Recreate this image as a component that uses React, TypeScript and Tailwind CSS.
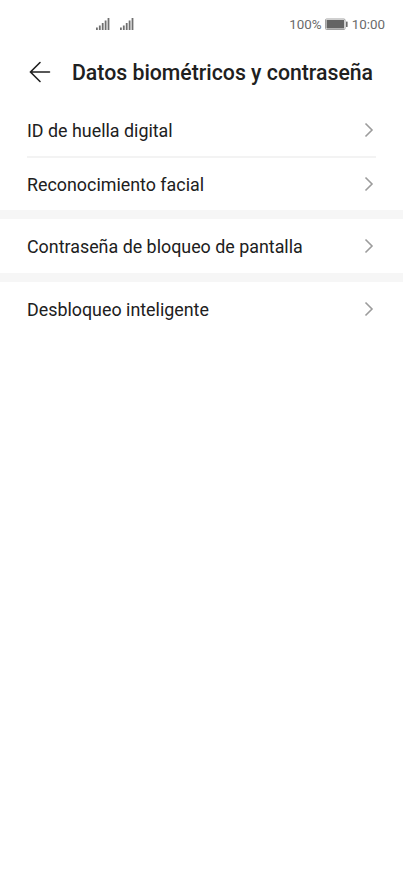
const groups = [
  ["ID de huella digital", "Reconocimiento facial"],
  ["Contraseña de bloqueo de pantalla"],
  ["Desbloqueo inteligente"],
];

function Signal() {
  return (
    <svg width="14" height="14" viewBox="0 0 14 14" fill="#707070">
      <rect x="0" y="10.5" width="1.8" height="2.5" />
      <rect x="2.9" y="8.5" width="1.8" height="4.5" />
      <rect x="5.8" y="6" width="1.8" height="7" />
      <rect x="8.7" y="3.5" width="1.8" height="9.5" />
      <rect x="11.6" y="1" width="1.8" height="12" />
    </svg>
  );
}

function StatusBar() {
  return (
    <div className="flex h-[48px] items-center pl-[96px] pr-[18px] text-[13.4px] text-[#6b6b6b]">
      <Signal />
      <span className="w-[10px]" />
      <Signal />
      <span className="ml-auto pt-[2px]">100%</span>
      <svg className="ml-[3px] mr-[4px]" width="23" height="12" viewBox="0 0 23 12">
        <rect x="0.5" y="1" width="19.5" height="10.5" rx="1" fill="none" stroke="#a0a0a0" />
        <rect x="1.5" y="2" width="17.5" height="8.5" fill="#646464" />
        <rect x="21" y="3.5" width="1.6" height="5.5" rx="0.5" fill="#6b6b6b" />
      </svg>
      <span className="pt-[2px]">10:00</span>
    </div>
  );
}

function Row({ label, divided }: { label: string; divided: boolean }) {
  return (
    <button className={`flex h-[54px] w-full items-center justify-between text-left ${divided ? "-mt-px border-t-2 border-[#f3f3f3]" : ""}`}>
      <span className="pt-[3px] text-[17.87px]">{label}</span>
      <svg className="mr-[2px]" width="10" height="16" viewBox="0 0 10 16" fill="none" stroke="#9c9c9c" strokeWidth="1.6">
        <path d="M1.5 1.5 8 8 1.5 14.5" />
      </svg>
    </button>
  );
}

export default function App() {
  return (
    <div className="min-h-screen bg-white font-[Roboto,sans-serif] text-[#202020]">
      <StatusBar />
      <header className="flex h-[55px] items-center pl-[29px] pb-[7px]">
        <svg width="22" height="22" viewBox="0 0 22 22" fill="none" stroke="#202020" strokeWidth="1.6" strokeLinecap="round">
          <path d="M11 1.5 1.5 11l9.5 9.5M1.5 11h19" />
        </svg>
        <h1 className="ml-[21px] whitespace-nowrap pt-[2px] text-[21.25px] font-medium">Datos biométricos y contraseña</h1>
      </header>
      <main>
        {groups.map((rows, i) => (
          <section key={rows[0]} className={`px-[27px] ${i > 0 ? "border-t-[9px] border-[#f6f6f6]" : ""}`}>
            {rows.map((label, j) => (
              <Row key={label} label={label} divided={j > 0} />
            ))}
          </section>
        ))}
      </main>
    </div>
  );
}
